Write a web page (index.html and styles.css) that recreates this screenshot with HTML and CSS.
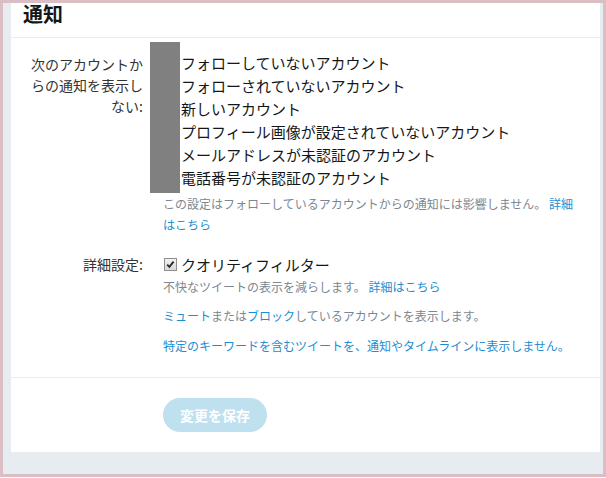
FILE: index.html
```html
<!DOCTYPE html>
<html lang="ja">
<head>
<meta charset="utf-8">
<title>通知</title>
<link rel="stylesheet" href="styles.css">
</head>
<body>
<div class="frame">
  <div class="card">
    <div class="header"><h1 class="title">通知</h1></div>
    <div class="form">
      <div class="row">
        <div class="label">次のアカウントからの通知を表示しない:</div>
        <div class="controls">
          <ul class="opts">
            <li>フォローしていないアカウント</li>
            <li>フォローされていないアカウント</li>
            <li>新しいアカウント</li>
            <li>プロフィール画像が設定されていないアカウント</li>
            <li>メールアドレスが未認証のアカウント</li>
            <li>電話番号が未認証のアカウント</li>
          </ul>
          <p class="help help-top">この設定はフォローしているアカウントからの通知には影響しません。 <a class="link" href="#">詳細</a><a class="link" href="#">はこちら</a></p>
        </div>
      </div>
      <div class="row row-adv">
        <div class="label">詳細設定:</div>
        <div class="controls">
          <div class="check"><span class="box"><svg width="11" height="11" viewBox="0 0 11 11"><path d="M2.2 5.6 L4.4 7.8 L8.6 2.6" fill="none" stroke="#2b2b2b" stroke-width="1.9"/></svg></span>クオリティフィルター</div>
          <p class="help help-first">不快なツイートの表示を減らします。 <a class="link" href="#">詳細はこちら</a></p>
          <p class="help"><a class="link" href="#">ミュート</a>または<a class="link" href="#">ブロック</a>しているアカウントを表示します。</p>
          <p class="help help-last"><a class="link" href="#">特定のキーワードを含むツイートを、通知やタイムラインに表示しません。</a></p>
        </div>
      </div>
    </div>
    <div class="actions"><button class="save" type="button">変更を保存</button></div>
    <div class="redact"></div>
  </div>
</div>
</body>
</html>
```

FILE: styles.css
```css
* { box-sizing: border-box; }
html, body { margin: 0; padding: 0; background: #fff; }
body { font-family: "Noto Sans CJK JP", "Noto Sans", sans-serif; }

.frame {
  width: 606px;
  height: 477px;
  border: 3px solid #d9bfc3;
  background: #e6ecf0;
  padding: 0 3px 0 8px;
}

.card {
  position: relative;
  background: #fff;
}

.header {
  height: 35px;
  padding: 0 0 0 12px;
  border-bottom: 1px solid #e6ecf0;
}
.title {
  margin: 0;
  font-size: 20px;
  line-height: 22px;
  font-weight: 700;
  color: #14171a;
}

.form {
  padding: 13px 0 21px 0;
}

.row {
  display: flex;
  gap: 20px;
}
.row-adv { margin-top: 18px; }

.label {
  width: 114px;
  margin-left: 18px;
  padding-top: 3px;
  text-align: right;
  font-size: 14px;
  line-height: 21px;
  color: #333;
}
.row-adv .label { padding-top: 1px; }

.controls {
  width: 417px;
}

.opts {
  list-style: none;
  margin: 0;
  padding: 0;
}
.opts li {
  padding-left: 18px;
  font-size: 15px;
  line-height: 23px;
  color: #14171a;
  white-space: nowrap;
}

.help {
  margin: 8px 0 0 0;
  font-size: 12px;
  line-height: 21px;
  color: #7b8792;
}
.help-top { margin-top: 4px; }
.help-first { margin-top: 0; }
.help-last { margin-top: 9px; }

.link {
  color: #1c8ed3;
  text-decoration: none;
}

.check {
  display: flex;
  align-items: center;
  font-size: 15px;
  line-height: 23px;
  color: #14171a;
}
.box {
  display: flex;
  align-items: center;
  justify-content: center;
  width: 13px;
  height: 13px;
  margin: 0 4px 0 1px;
  border: 1px solid #8f8f8f;
  background: linear-gradient(#f2f2f2, #d9d9d9);
}

.actions {
  border-top: 1px solid #e6ecf0;
  padding: 20px 0 20px 152px;
}
.save {
  display: block;
  height: 34px;
  padding: 0 17px;
  border: none;
  border-radius: 17px;
  background: #bfe0ee;
  color: #fff;
  font-family: "Noto Sans CJK JP", sans-serif;
  font-size: 14px;
  font-weight: 700;
  line-height: 34px;
}

.redact {
  position: absolute;
  left: 139px;
  top: 39px;
  width: 30px;
  height: 151px;
  background: #808080;
}
```
